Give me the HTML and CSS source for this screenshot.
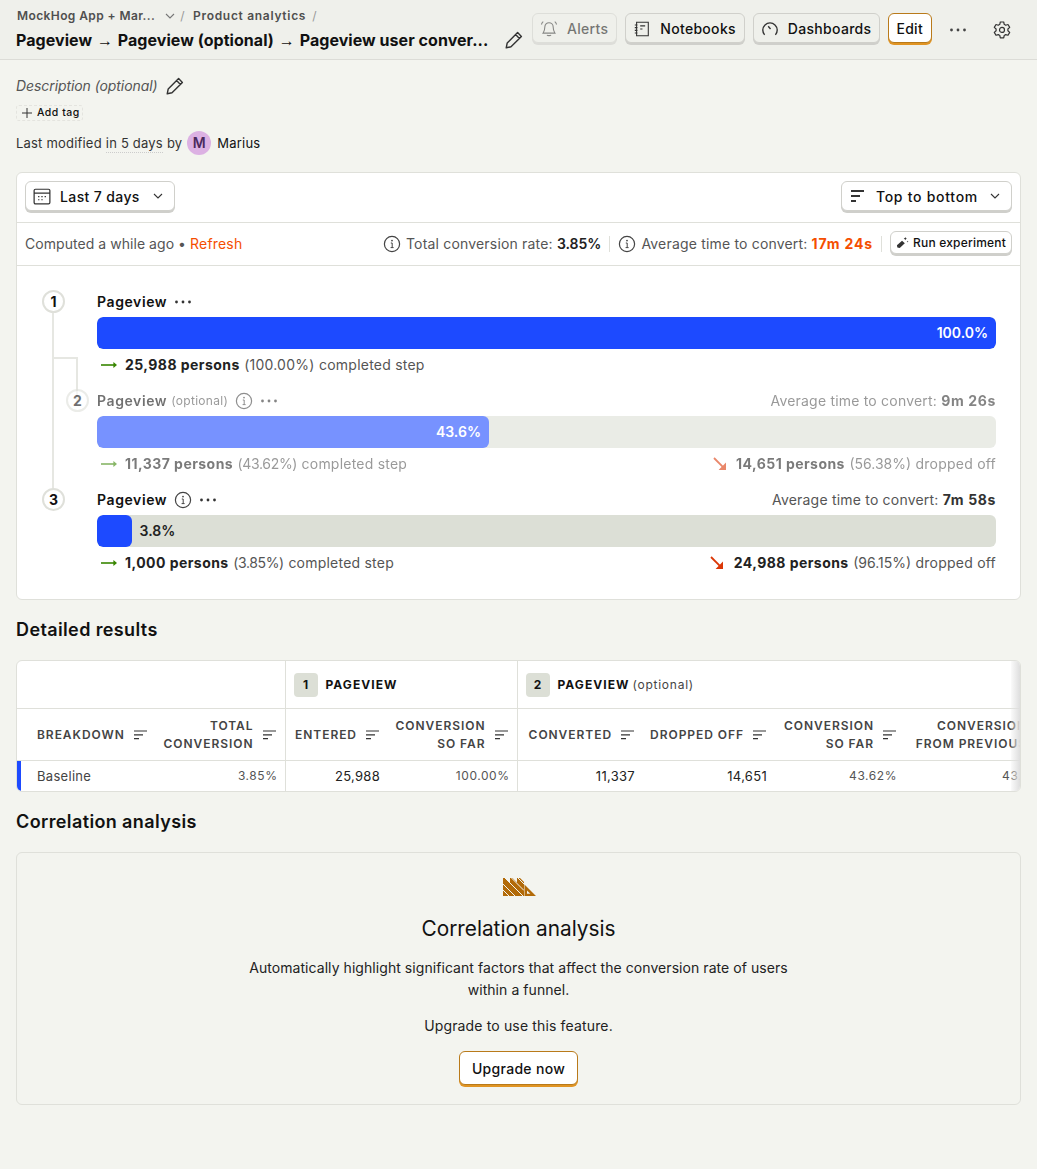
FILE: index.html
```html
<!DOCTYPE html>
<html lang="en">
<head>
 <meta charset="UTF-8">
 <meta name="viewport" content="width=device-width, initial-scale=1.0">
 <title>Funnel insight</title>
 <link rel="stylesheet" href="styles.css">
</head>
<body>
 <svg class="sprites" width="0" height="0" aria-hidden="true">
  <symbol id="i-pencil" viewBox="0 0 20 20"><path d="M13.6 2.6l3.8 3.8L7 16.8l-4.8 1 1-4.8z M11.6 4.6l3.8 3.8" fill="none" stroke="currentColor" stroke-width="1.4" stroke-linejoin="round"/></symbol>
  <symbol id="i-chevron" viewBox="0 0 12 12"><path d="M2 4l4 4 4-4" fill="none" stroke="currentColor" stroke-width="1.1"/></symbol>
  <symbol id="i-info" viewBox="0 0 18 18"><circle cx="9" cy="9" r="7.6" fill="none" stroke="currentColor" stroke-width="1.2"/><path d="M7.8 8h1.4v4.4 M7.6 12.6h3" fill="none" stroke="currentColor" stroke-width="1"/><circle cx="9" cy="5.6" r=".9" fill="currentColor"/></symbol>
  <symbol id="i-sort" viewBox="0 0 14 10"><path d="M0 1h13 M0 4.8h9 M0 8.6h5" fill="none" stroke="currentColor" stroke-width="1.2"/></symbol>
  <symbol id="i-dots" viewBox="0 0 18 4"><circle cx="2.5" cy="2" r="1.4" fill="currentColor"/><circle cx="9" cy="2" r="1.4" fill="currentColor"/><circle cx="15.5" cy="2" r="1.4" fill="currentColor"/></symbol>
  <symbol id="i-arrow" viewBox="0 0 16 8"><path d="M0 4h13.5" stroke="currentColor" stroke-width="1.6"/><path d="M12.4 1L16 4l-3.6 3z" fill="currentColor"/></symbol>
  <symbol id="i-drop" viewBox="0 0 14 14"><path d="M1 1l10.6 10.6" stroke="currentColor" stroke-width="1.8"/><path d="M13 5.6V13H5.6z" fill="currentColor"/></symbol>
 </svg>

 <header class="topbar">
  <div class="topbar-left">
   <div class="crumbs">
    <span class="crumb crumb-org">MockHog App + Mar...</span>
    <svg class="crumb-chevron"><use href="#i-chevron"/></svg>
    <span class="crumb-sep">/</span>
    <span class="crumb crumb-scene">Product analytics</span>
    <span class="crumb-sep crumb-sep-last">/</span>
   </div>
   <h1 class="page-title">Pageview <span class="title-arrow">→</span> Pageview (optional) <span class="title-arrow">→</span> Pageview user conver...</h1>
  </div>
  <svg class="icon-pencil title-pencil"><use href="#i-pencil"/></svg>
  <div class="topbar-actions">
   <button class="btn btn-bar btn-off">
    <svg class="btn-icon" viewBox="0 0 20 20"><path d="M10 3a4.6 4.6 0 0 0-4.6 4.6c0 4-1.4 6-2 7h13.2c-.6-1-2-3-2-7A4.6 4.6 0 0 0 10 3z M7.8 16.6c.6 1 3.8 1 4.4 0 M1.6 5c.4-1.400 1-2.400 2-3.200 M18.400 5c-.4-1.400-1-2.400-2-3.200" fill="none" stroke="currentColor" stroke-width="1.200"/></svg>
    Alerts
   </button>
   <button class="btn btn-bar">
    <svg class="btn-icon" viewBox="0 0 20 20"><path d="M4 2.500h13v15H4z M8 6.500h5.500 M8 10h2.500 M2 5.500h3 M2 8.500h3 M2 11.500h3 M2 14.500h3" fill="none" stroke="currentColor" stroke-width="1.200"/></svg>
    Notebooks
   </button>
   <button class="btn btn-bar">
    <svg class="btn-icon" viewBox="0 0 20 20"><path d="M4 16.500a8 8 0 1 1 12 0 M8 7l2.600 3" fill="none" stroke="currentColor" stroke-width="1.500"/></svg>
    Dashboards
   </button>
   <button class="btn btn-edit">Edit</button>
   <svg class="bar-dots"><use href="#i-dots"/></svg>
   <svg class="bar-gear" viewBox="0 0 20 20"><path d="M8.300 2h3.400l.5 2.300 1.500.9 2.300-.7 1.700 2.900-1.800 1.600v1.800l1.800 1.600-1.700 2.900-2.300-.7-1.500.9-.5 2.300H8.300l-.5-2.300-1.500-.9-2.300.7-1.700-2.900L4.100 10.800V9L2.300 7.400 4 4.500l2.300.7 1.500-.9z" fill="none" stroke="currentColor" stroke-width="1.200" stroke-linejoin="round"/><circle cx="10" cy="9.900" r="2.500" fill="none" stroke="currentColor" stroke-width="1.200"/></svg>
  </div>
 </header>

 <main class="page">
  <div class="description">
   <em>Description (optional)</em>
   <svg class="icon-pencil"><use href="#i-pencil"/></svg>
  </div>
  <div class="add-tag">
   <svg class="add-tag-plus" viewBox="0 0 10 10"><path d="M5 0v10 M0 5h10" stroke="currentColor" stroke-width="1"/></svg>
   Add tag
  </div>
  <div class="modified">
   Last modified <span class="dotted">in 5 days</span> by
   <span class="avatar">M</span>
   <span class="modified-name">Marius</span>
  </div>

  <section class="card funnel">
   <div class="funnel-controls">
    <button class="btn btn-white btn-date">
     <svg class="btn-icon" viewBox="0 0 16 16"><path d="M1 3.200c0-.7.500-1.200 1.200-1.200h11.600c.7 0 1.200.500 1.200 1.200v10.600c0 .7-.500 1.200-1.200 1.200H2.200c-.7 0-1.200-.500-1.200-1.200z M1 5.500h14" fill="none" stroke="currentColor" stroke-width="1.100"/><path d="M4.500 8h1.200v1H4.500z M7.400 8h1.200v1H7.400z M10.300 8h1.200v1h-1.200z M4.500 10.800h1.200v1H4.500z M7.400 10.800h1.200v1H7.400z" fill="currentColor"/></svg>
     Last 7 days
     <svg class="btn-chevron"><use href="#i-chevron"/></svg>
    </button>
    <button class="btn btn-white btn-order">
     <svg class="btn-icon order-icon" viewBox="0 0 14 12"><path d="M0 0h13v2H0z M0 5h9v2H0z M0 10h5v2H0z" fill="currentColor"/></svg>
     Top to bottom
     <svg class="btn-chevron"><use href="#i-chevron"/></svg>
    </button>
   </div>
   <div class="funnel-summary">
    <div class="computed">Computed a while ago • <span class="refresh">Refresh</span></div>
    <div class="summary-right">
     <svg class="info info-big"><use href="#i-info"/></svg>
     <span class="summary-item">Total conversion rate: <b>3.85%</b></span>
     <span class="summary-rule"></span>
     <svg class="info info-big"><use href="#i-info"/></svg>
     <span class="summary-item">Average time to convert: <b class="hot">17m 24s</b></span>
     <span class="summary-rule"></span>
     <button class="btn btn-white btn-small">
      <svg class="wand" viewBox="0 0 14 14"><path d="M1.500 12.500L1 10l5.500-5 3 2.800-5.500 5z" fill="currentColor"/><path d="M10 1l.5 1.200L11.700 3l-1.200.5L10 4.700 9.500 3.500 8.300 3l1.200-.8z M12.500 5l.3.700.7.300-.7.300-.3.700-.3-.7-.7-.3.700-.3z" fill="currentColor"/></svg>
      Run experiment
     </button>
    </div>
   </div>

   <div class="funnel-steps">
    <svg class="step-lines" width="60" height="210" viewBox="0 0 60 210"><path d="M10 10v188 M10 56h24v44" fill="none" stroke="#e6e7e2" stroke-width="2"/></svg>

    <div class="step">
     <div class="step-gutter"><span class="step-num">1</span></div>
     <div class="step-body">
      <div class="step-head">
       <div class="step-name"><b>Pageview</b><svg class="step-dots"><use href="#i-dots"/></svg></div>
      </div>
      <div class="track"><div class="fill fill-inside" style="width:100%">100.0%</div></div>
      <div class="step-stats">
       <div class="stat"><svg class="arrow-done"><use href="#i-arrow"/></svg><b>25,988 persons</b><span class="stat-dim">(100.00%)</span><span class="stat-dim">completed step</span></div>
      </div>
     </div>
    </div>

    <div class="step step-optional">
     <div class="step-gutter step-gutter-in"><span class="step-num">2</span></div>
     <div class="step-body">
      <div class="step-head">
       <div class="step-name"><b>Pageview</b> <span class="optional">(optional)</span><svg class="info info-step"><use href="#i-info"/></svg><svg class="step-dots"><use href="#i-dots"/></svg></div>
       <div class="step-time">Average time to convert: <b>9m 26s</b></div>
      </div>
      <div class="track"><div class="fill fill-inside" style="width:43.6%">43.6%</div></div>
      <div class="step-stats">
       <div class="stat"><svg class="arrow-done"><use href="#i-arrow"/></svg><b>11,337 persons</b><span class="stat-dim stat-pct">(43.62%)</span><span class="stat-dim">completed step</span></div>
       <div class="stat"><svg class="arrow-drop"><use href="#i-drop"/></svg><b>14,651 persons</b><span class="stat-dim stat-pct-off">(56.38%)</span><span class="stat-dim">dropped off</span></div>
      </div>
     </div>
    </div>

    <div class="step">
     <div class="step-gutter"><span class="step-num">3</span></div>
     <div class="step-body">
      <div class="step-head">
       <div class="step-name"><b>Pageview</b><svg class="info info-step"><use href="#i-info"/></svg><svg class="step-dots"><use href="#i-dots"/></svg></div>
       <div class="step-time">Average time to convert: <b>7m 58s</b></div>
      </div>
      <div class="track"><div class="fill" style="width:3.85%"></div><span class="fill-outside">3.8%</span></div>
      <div class="step-stats">
       <div class="stat"><svg class="arrow-done"><use href="#i-arrow"/></svg><b>1,000 persons</b><span class="stat-dim stat-pct">(3.85%)</span><span class="stat-dim">completed step</span></div>
       <div class="stat"><svg class="arrow-drop"><use href="#i-drop"/></svg><b>24,988 persons</b><span class="stat-dim stat-pct-off">(96.15%)</span><span class="stat-dim">dropped off</span></div>
      </div>
     </div>
    </div>
   </div>
  </section>

  <h2 class="section-title results-title">Detailed results</h2>

  <section class="card results">
   <table class="results-table">
    <colgroup>
     <col class="c-breakdown"><col class="c-total"><col class="c-entered"><col class="c-sofar"><col class="c-converted"><col class="c-dropped"><col class="c-sofar2"><col class="c-prev">
    </colgroup>
    <thead>
     <tr class="group-row">
      <th colspan="2"></th>
      <th colspan="2" class="group"><div class="group-inner"><span class="group-num">1</span><b>PAGEVIEW</b></div></th>
      <th colspan="4" class="group"><div class="group-inner"><span class="group-num">2</span><b>PAGEVIEW</b><span class="group-opt">(optional)</span></div></th>
     </tr>
     <tr class="col-row">
      <th class="col-first"><div class="col-head col-left"><span>BREAKDOWN</span><svg class="sort"><use href="#i-sort"/></svg></div></th>
      <th class="rule"><div class="col-head"><span>TOTAL<br>CONVERSION</span><svg class="sort"><use href="#i-sort"/></svg></div></th>
      <th><div class="col-head"><span>ENTERED</span><svg class="sort"><use href="#i-sort"/></svg></div></th>
      <th class="rule"><div class="col-head"><span>CONVERSION<br>SO FAR</span><svg class="sort"><use href="#i-sort"/></svg></div></th>
      <th><div class="col-head"><span>CONVERTED</span><svg class="sort"><use href="#i-sort"/></svg></div></th>
      <th><div class="col-head"><span>DROPPED OFF</span><svg class="sort"><use href="#i-sort"/></svg></div></th>
      <th><div class="col-head"><span>CONVERSION<br>SO FAR</span><svg class="sort"><use href="#i-sort"/></svg></div></th>
      <th><div class="col-head"><span>CONVERSION<br>FROM PREVIOUS</span><svg class="sort"><use href="#i-sort"/></svg></div></th>
     </tr>
    </thead>
    <tbody>
     <tr>
      <td class="cell-name">Baseline</td>
      <td class="num dim rule">3.85%</td>
      <td class="num">25,988</td>
      <td class="num dim rule">100.00%</td>
      <td class="num">11,337</td>
      <td class="num">14,651</td>
      <td class="num dim">43.62%</td>
      <td class="num dim">43.62%</td>
     </tr>
    </tbody>
   </table>
   <div class="row-mark"></div>
   <div class="scroll-shadow"></div>
  </section>

  <h2 class="section-title corr-title">Correlation analysis</h2>

  <section class="upsell">
   <svg class="upsell-logo" width="33" height="18" viewBox="0 0 33 18">
    <path d="M0 0H2L7 5V0H9.500L14 4.500V0H17L21 4V18H0z" fill="#b26a08"/>
    <path d="M0 6L12 18 M0 12L6 18 M2 0L20 18 M8.500 0L21 12.500 M15 0L21 6" fill="none" stroke="#f3f4ef" stroke-width="1"/>
    <path d="M21.500 6.500L33 18H21.500zM24 12.500V15.800H27.400z" fill="#b26a08" fill-rule="evenodd"/>
   </svg>
   <h3 class="upsell-title">Correlation analysis</h3>
   <p class="upsell-text">Automatically highlight significant factors that affect the conversion rate of users within a funnel.</p>
   <p class="upsell-note">Upgrade to use this feature.</p>
   <button class="btn btn-edit btn-upgrade">Upgrade now</button>
  </section>
 </main>
</body>
</html>
```

FILE: styles.css
```css
* { box-sizing: border-box; }

body {
  margin: 0;
  background: #f3f4ef;
  color: #111;
  font-family: Inter, "Liberation Sans", sans-serif;
  font-size: 14px;
  line-height: 20px;
}

.sprites { position: absolute; }

/* top bar */
.topbar {
  display: flex;
  align-items: flex-start;
  height: 60px;
  padding: 0 16px;
  background: #eff0eb;
  border-bottom: 1px solid #dcdcd7;
}
.topbar-left { width: 478px; padding-top: 6px; }
.crumbs {
  display: flex;
  align-items: center;
  height: 20px;
  color: #4f4f4f;
  font-size: 12px;
  font-weight: 600;
  letter-spacing: 0.4px;
}
.crumb-org { margin-left: 1px; }
.crumb-scene { letter-spacing: 0.7px; }
.crumb-chevron { width: 12px; height: 12px; margin-left: 9px; color: #777; }
.crumb-sep { margin: 0 8px 0 4px; color: #999; font-weight: 400; }
.crumb-sep-last { margin-left: 6px; }
.page-title {
  margin: 2px 0 0;
  font-size: 16px;
  line-height: 24px;
  font-weight: 700;
  letter-spacing: 0.05px;
  white-space: nowrap;
}
.title-arrow { margin: 0 1px; font-family: "Liberation Sans", sans-serif; font-weight: 400; }
.icon-pencil { width: 20px; height: 20px; color: #333; }
.title-pencil { margin: 30px 0 0 10px; }
.topbar-actions {
  display: flex;
  align-items: flex-start;
  margin: 13px 0 0 8px;
  gap: 8px;
}

/* buttons */
.btn {
  display: inline-flex;
  align-items: center;
  height: 30px;
  padding: 0 8px 0 7px;
  border: 1px solid #d0d0cb;
  border-radius: 6px;
  background: #fff;
  color: #111;
  font-family: inherit;
  font-size: 14px;
  font-weight: 450;
  letter-spacing: 0.3px;
  box-shadow: 0 2px 0 #cfcfcb;
  white-space: nowrap;
}
.btn-bar { background: #eff0eb; padding-top: 1px; }
.btn-off { opacity: 0.55; }
.btn-icon { width: 18px; height: 18px; margin-right: 9px; color: #333; flex: none; }
.btn-edit {
  background: #fff;
  border-color: #b97a1a;
  box-shadow: 0 2px 0 #e09423;
}
.bar-dots { width: 18px; height: 4px; margin: 15px 0 0 9px; color: #444; }
.bar-gear { width: 20px; height: 20px; margin: 7px 0 0 17px; color: #333; }

/* title block */
.page { padding: 0 16px 64px; }
.description {
  display: flex;
  align-items: center;
  height: 24px;
  margin-top: 14px;
  color: #555;
  letter-spacing: -0.08px;
  gap: 7px;
}
.add-tag {
  display: flex;
  align-items: center;
  width: 67px;
  height: 16px;
  margin-top: 7px;
  padding-left: 5px;
  border: 1px dashed #e4e4df;
  border-radius: 3px;
  font-size: 10.5px;
  font-weight: 500;
  letter-spacing: 0.5px;
  gap: 5px;
}
.add-tag-plus { width: 10px; height: 10px; color: #333; }
.modified {
  display: flex;
  align-items: center;
  height: 24px;
  margin-top: 10px;
  font-size: 13px;
  letter-spacing: 0.2px;
  color: #333;
  gap: 4px;
}
.dotted { border-bottom: 1px dotted #ccc; line-height: 17px; margin-top: 2px; }
.avatar {
  width: 24px;
  height: 24px;
  margin-left: 1px;
  border-radius: 50%;
  background: #dcb1e3;
  color: #4b2a5e;
  font-size: 14px;
  font-weight: 600;
  line-height: 24px;
  text-align: center;
}
.modified-name { margin-left: 2px; color: #111; }

/* cards */
.card {
  position: relative;
  background: #fff;
  border: 1px solid #dfe0da;
  border-radius: 6px;
}
.funnel { margin-top: 17px; }
.funnel-controls {
  display: flex;
  justify-content: space-between;
  height: 50px;
  padding: 8px;
  border-bottom: 1px solid #dfe0da;
}
.btn-white { padding-right: 10px; }
.btn-white .btn-icon { margin-right: 8px; }
.btn-date { letter-spacing: 0.38px; }
.btn-date .btn-icon { margin-right: 9px; }
.btn-white .order-icon { width: 14px; height: 12px; margin: 0 11px 0 2px; }
.btn-order { letter-spacing: 0.72px; }
.btn-order .btn-chevron { margin-left: 11px; }
.btn-chevron { width: 12px; height: 12px; margin-left: 12px; color: #333; }
.funnel-summary {
  display: flex;
  justify-content: space-between;
  align-items: center;
  height: 43px;
  padding: 0 8px;
  border-bottom: 1px solid #dfe0da;
  color: #555;
  letter-spacing: 0.05px;
}
.refresh, .hot { color: #f54e00; }
.refresh { letter-spacing: 0.2px; }
.summary-right { display: flex; align-items: center; }
.summary-item { letter-spacing: 0.18px; }
.summary-item b { color: #222; font-weight: 600; letter-spacing: 0; }
.summary-item b.hot { color: #f54e00; font-weight: 700; letter-spacing: 0.85px; }
.info { color: #444; flex: none; }
.info-big { width: 18px; height: 18px; margin-right: 5px; }
.summary-rule { width: 1px; height: 16px; margin: 0 8px; background: #dfe0da; }
.btn-small {
  height: 23px;
  margin: -3px 0 0;
  padding: 0 5px;
  font-size: 12px;
  font-weight: 500;
  letter-spacing: 0.2px;
}
.wand { width: 13px; height: 13px; margin-right: 4px; color: #333; }

/* funnel steps */
.funnel-steps { position: relative; padding: 24px 24px 19px 0; }
.step-lines { position: absolute; left: 26px; top: 36px; }
.step { display: flex; height: 99px; }
.step:last-of-type { height: 92px; }
.step-gutter { position: relative; width: 80px; flex: none; padding-left: 25px; }
.step-gutter-in { padding-left: 49px; }
.step-num {
  display: block;
  width: 23px;
  height: 23px;
  border: 2px solid #dfe0da;
  border-radius: 50%;
  background: #fff;
  font-size: 14px;
  font-weight: 700;
  line-height: 19px;
  text-align: center;
}
.step-body { flex: 1; min-width: 0; }
.step-head {
  display: flex;
  justify-content: space-between;
  align-items: center;
  height: 24px;
  margin-bottom: 3px;
}
.step-name { display: flex; align-items: center; }
.step-name b { font-weight: 600; letter-spacing: 0.6px; }
.optional { margin-left: 4px; font-size: 12px; color: #555; letter-spacing: 0.3px; }
.info-step { width: 18px; height: 18px; margin-left: 7px; }
.step-dots { width: 18px; height: 4px; margin-left: 7px; color: #333; }
.step-time { color: #555; letter-spacing: 0.2px; }
.step-time b { font-weight: 700; color: #333; letter-spacing: 0.65px; }
.track {
  display: flex;
  align-items: center;
  height: 32px;
  background: #dcdfd6;
  border-radius: 6px;
  overflow: hidden;
}
.fill {
  height: 100%;
  background: #1d4aff;
  border-radius: 6px;
}
.fill-inside {
  padding-right: 8px;
  color: #fff;
  font-weight: 600;
  line-height: 32px;
  text-align: right;
}
.fill-outside { margin-left: 8px; font-weight: 600; color: #222; }
.step-stats {
  display: flex;
  justify-content: space-between;
  height: 33px;
  padding-top: 6px;
}
.stat { display: flex; align-items: center; height: 20px; gap: 4.5px; white-space: pre; }
.stat b { font-weight: 700; color: #222; letter-spacing: 0.45px; }
.stat-dim { color: #555; letter-spacing: 0.22px; }
.stat-pct { letter-spacing: -0.35px; }
.stat-pct-off { letter-spacing: 0; }
.arrow-done { width: 16px; height: 8px; margin: 0 3.5px 0 4px; color: #388600; }
.arrow-drop { width: 14px; height: 14px; margin-right: 5px; color: #db3707; }
.step-optional .step-num,
.step-optional .step-body { opacity: 0.6; }

/* detailed results */
.section-title {
  margin: 0;
  font-size: 18px;
  line-height: 28px;
  font-weight: 600;
  letter-spacing: 0.38px;
}
.results-title { margin-top: 16px; }
.results { margin-top: 16px; height: 132px; overflow: hidden; }
.results-table {
  width: 1041px;
  table-layout: fixed;
  border-collapse: collapse;
}
.c-breakdown { width: 137px; }
.c-total { width: 131px; }
.c-entered { width: 103px; }
.c-sofar { width: 129px; }
.c-converted { width: 126px; }
.c-dropped { width: 132px; }
.c-sofar2 { width: 130px; }
.c-prev { width: 153px; }
.results-table th, .results-table td { padding: 0 8px; }
.group-row th { height: 47px; padding-top: 1px; border-bottom: 1px solid #dfe0da; text-align: left; }
.group { border-left: 1px solid #dfe0da; font-size: 12px; font-weight: 500; color: #111; white-space: nowrap; }
.group-inner { display: flex; align-items: center; }
.group b { font-weight: 700; letter-spacing: 1.05px; }
.group-num {
  width: 24px;
  height: 24px;
  margin-right: 8px;
  border-radius: 4px;
  background: #dcdfd6;
  font-weight: 700;
  line-height: 24px;
  text-align: center;
}
.group-opt { margin-left: 3px; color: #444; font-weight: 400; letter-spacing: 0.75px; }
.col-row th {
  height: 52px;
  padding-top: 1px;
  border-bottom: 1px solid #dfe0da;
  color: #444;
  font-size: 12px;
  font-weight: 600;
  letter-spacing: 0.95px;
  line-height: 18px;
}
.col-row th.rule { border-right: 1px solid #dfe0da; }
.col-first { padding-left: 20px !important; }
.col-head { display: flex; justify-content: flex-end; align-items: center; gap: 9px; text-align: right; white-space: nowrap; }
.col-left { justify-content: space-between; }
.sort { width: 14px; height: 10px; flex: none; color: #333; }
.results-table td { height: 31px; font-size: 13px; letter-spacing: 0.3px; color: #222; }
.results-table td.rule { border-right: 1px solid #dfe0da; padding-right: 7px; }
.cell-name { padding-left: 20px !important; color: #444 !important; }
.num { text-align: right; }
.results-table td.dim { color: #555; font-size: 12px; letter-spacing: 0.55px; }
.row-mark { position: absolute; left: 0; bottom: 0; width: 4px; height: 30px; background: #1d4aff; }
.scroll-shadow {
  position: absolute;
  right: 0;
  top: 0;
  bottom: 0;
  width: 9px;
  background: linear-gradient(to right, rgba(232, 232, 232, 0.2), rgba(222, 222, 222, 1));
}

/* correlation */
.corr-title { margin-top: 16px; }
.upsell {
  display: flex;
  flex-direction: column;
  align-items: center;
  height: 253px;
  margin-top: 16px;
  padding-top: 25px;
  border: 1px solid #dfe0da;
  border-radius: 6px;
  text-align: center;
}
.upsell-logo { margin-left: 2px; }
.upsell-title {
  margin: 16px 0 0;
  font-size: 20.8px;
  line-height: 34px;
  font-weight: 400;
  letter-spacing: 0;
}
.upsell-text {
  width: 560px;
  margin: 11px 0 0;
  line-height: 22px;
  letter-spacing: 0.06px;
  color: #222;
}
.upsell-note { margin: 14px 0 0; line-height: 22px; letter-spacing: 0.15px; color: #222; }
.btn-upgrade { height: 34px; margin-top: 14px; padding: 0 12px; }
```
